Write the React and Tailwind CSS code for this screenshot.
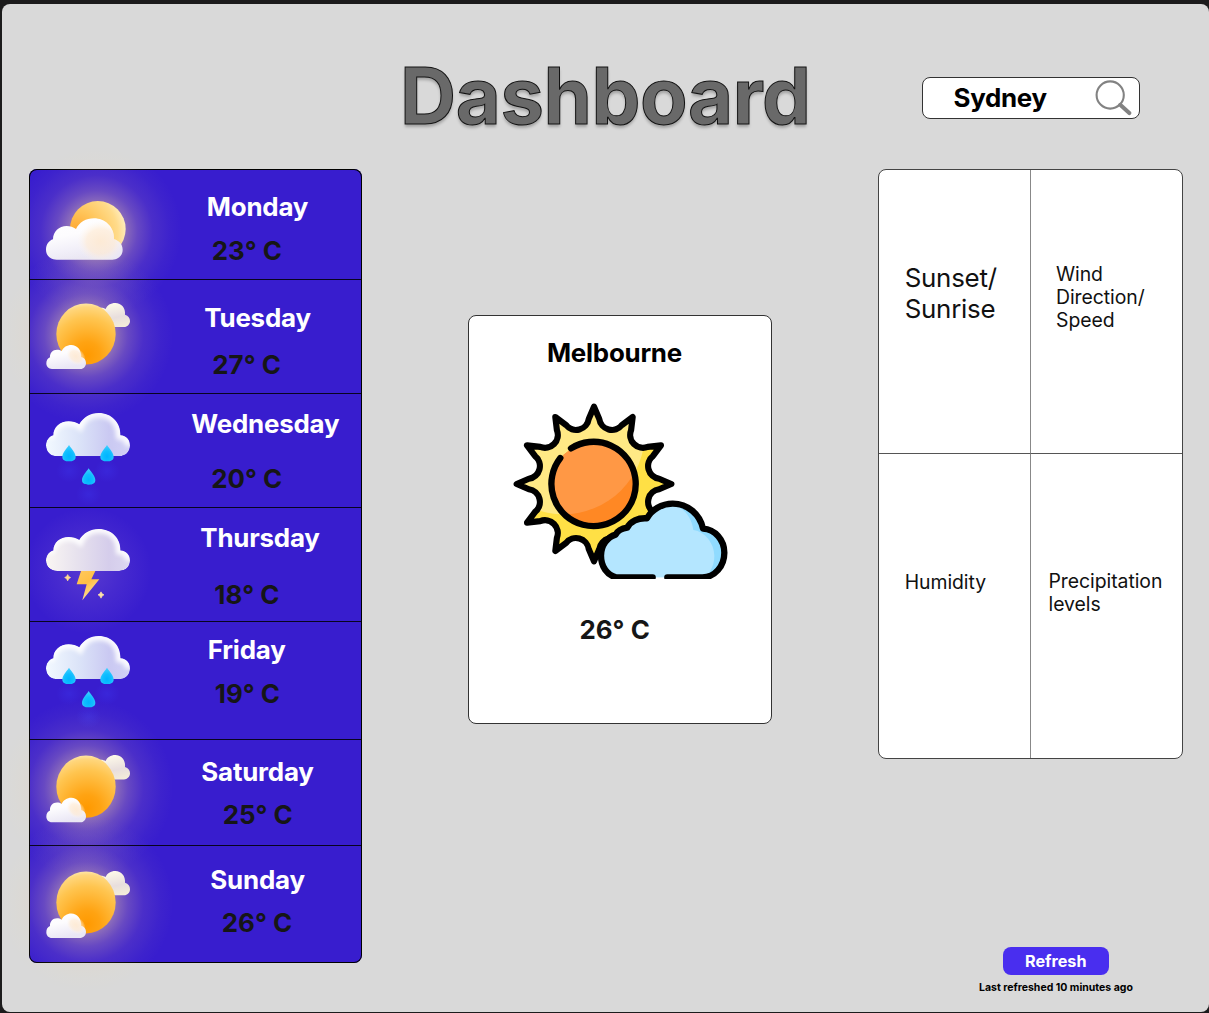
import React from "react";

const CLOUD =
  "M112 126C90 126 78 112 78 94C78 79 88 68 100 65C100 41 120 24 146 24C158 24 169 27 178 33C189 13 211 0 236 0C274 0 303 28 301 65C320 66 330 80 330 95C330 113 317 126 298 126Z";

const NEAR_CLOUD =
  "M170 779C150 779 138 765 138 749C138 733 147 722 159 718C159 695 177 678 200 678C210 678 220 681 228 687C238 667 258 655 282 655C316 655 344 682 342 718C357 722 368 733 368 749C368 766 355 779 337 779Z";

function Defs() {
  return (
    <svg className="absolute size-0" aria-hidden="true">
      <defs>
        <radialGradient id="glow">
          <stop offset="0" stopColor="#ffdf80" stopOpacity="0.5" />
          <stop offset="0.33" stopColor="#fbd6a0" stopOpacity="0.44" />
          <stop offset="0.48" stopColor="#f5cca0" stopOpacity="0.25" />
          <stop offset="0.66" stopColor="#f3c8a0" stopOpacity="0.1" />
          <stop offset="0.85" stopColor="#f8e09a" stopOpacity="0.03" />
          <stop offset="1" stopColor="#f8e09a" stopOpacity="0" />
        </radialGradient>
        <radialGradient id="softGlow">
          <stop offset="0" stopColor="#c9a0d8" stopOpacity="0.22" />
          <stop offset="0.5" stopColor="#c9a0d8" stopOpacity="0.1" />
          <stop offset="1" stopColor="#c9a0d8" stopOpacity="0" />
        </radialGradient>
        <radialGradient id="dropGlow">
          <stop offset="0" stopColor="#3d3cf5" stopOpacity="0.3" />
          <stop offset="1" stopColor="#3d3cf5" stopOpacity="0" />
        </radialGradient>
        <radialGradient id="sun" cx="0.52" cy="0.85" r="0.88">
          <stop offset="0" stopColor="#ff9900" />
          <stop offset="0.25" stopColor="#ffa312" />
          <stop offset="0.7" stopColor="#ffc550" />
          <stop offset="0.9" stopColor="#ffd67c" />
          <stop offset="1" stopColor="#ffedbb" />
        </radialGradient>
        <radialGradient id="sunBehind" cx="0.1" cy="0.6" r="0.95">
          <stop offset="0" stopColor="#ffa229" />
          <stop offset="0.45" stopColor="#ffc55a" />
          <stop offset="0.8" stopColor="#ffdb8a" />
          <stop offset="1" stopColor="#fff0c8" />
        </radialGradient>
        <linearGradient id="white" x1="0" y1="0" x2="0.35" y2="1">
          <stop offset="0" stopColor="#ffffff" />
          <stop offset="0.45" stopColor="#fdfcfe" />
          <stop offset="1" stopColor="#eae7f5" />
        </linearGradient>
        <radialGradient id="warm">
          <stop offset="0" stopColor="#ffe8cc" stopOpacity="0.8" />
          <stop offset="0.6" stopColor="#ffebd3" stopOpacity="0.65" />
          <stop offset="1" stopColor="#fff6ec" stopOpacity="0" />
        </radialGradient>
        <linearGradient id="backCloud" x1="0.4" y1="0" x2="0.7" y2="1">
          <stop offset="0" stopColor="#fffbea" />
          <stop offset="0.6" stopColor="#e8dedd" />
          <stop offset="1" stopColor="#f3ecd9" />
        </linearGradient>
        <linearGradient id="rainCloud" x1="0" y1="0.6" x2="1" y2="0.6">
          <stop offset="0" stopColor="#f2f9ff" />
          <stop offset="0.4" stopColor="#dbe3f8" />
          <stop offset="0.75" stopColor="#cac9f2" />
          <stop offset="1" stopColor="#d2d1f6" />
        </linearGradient>
        <linearGradient id="stormCloud" x1="0" y1="0.6" x2="1" y2="0.6">
          <stop offset="0" stopColor="#faf6f3" />
          <stop offset="0.35" stopColor="#e8e3ee" />
          <stop offset="0.75" stopColor="#d5cdeb" />
          <stop offset="1" stopColor="#dcd7f1" />
        </linearGradient>
        <radialGradient id="drop" cx="0.5" cy="0.7" r="0.65">
          <stop offset="0" stopColor="#00b4ff" />
          <stop offset="0.5" stopColor="#0fbeff" />
          <stop offset="1" stopColor="#3fceff" />
        </radialGradient>
        <linearGradient id="bolt" x1="0" y1="0" x2="0.5" y2="1">
          <stop offset="0" stopColor="#ffc95f" />
          <stop offset="0.5" stopColor="#ffbf45" />
          <stop offset="1" stopColor="#ffe0a0" />
        </linearGradient>
        <clipPath id="cloudClip">
          <path d={CLOUD} />
        </clipPath>
        <clipPath id="nearCloudClip">
          <path d={NEAR_CLOUD} />
        </clipPath>
        <filter id="blur" x="-30%" y="-30%" width="160%" height="160%">
          <feGaussianBlur stdDeviation="7" />
        </filter>
      </defs>
    </svg>
  );
}

function PartlyCloudy({ className }) {
  return (
    <svg viewBox="138 603 252 176" preserveAspectRatio="none" className={className}>
      <circle cx="290" cy="694" r="255" fill="url(#glow)" />
      <ellipse cx="293.500" cy="687" rx="83.500" ry="84" fill="url(#sunBehind)" />
      <path d={NEAR_CLOUD} fill="url(#white)" />
      <ellipse cx="302" cy="724" rx="70" ry="62" fill="url(#warm)" clipPath="url(#nearCloudClip)" />
    </svg>
  );
}

function Sunny({ className }) {
  return (
    <svg viewBox="78 83 252 199" preserveAspectRatio="none" className={className}>
      <circle cx="198" cy="180" r="262" fill="url(#glow)" />
      <path
        d="M232 155V100C240 95 250 97 257 101C261 90 272 83 286 83C304 83 317 98 315 118C325 121 330 128 330 137C330 147 322 155 312 155Z"
        fill="url(#backCloud)"
      />
      <ellipse cx="198" cy="176" rx="89" ry="91.500" fill="url(#sun)" />
      <path
        d="M96 281C86 281 79 274 79 264C79 255 83 249 90 246C89 233 98 223 111 223C116 223 121 224 125 227C130 216 141 209 154 209C171 209 185 224 183 245C193 247 198 254 198 263C198 273 191 281 181 281Z"
        fill="url(#white)"
      />
      <ellipse cx="168" cy="243" rx="32" ry="24" fill="url(#warm)" transform="rotate(40 168 243)" />
    </svg>
  );
}

function Drop({ x, y }) {
  return (
    <g>
      <ellipse cx={x} cy={y + 78} rx="38" ry="34" fill="url(#dropGlow)" />
      <path
        transform={`translate(${x} ${y})`}
        d="M0 0C7 11 20 24 20 35C20 45 12 49 0 49C-12 49 -20 45 -20 35C-20 24 -7 11 0 0Z"
        fill="url(#drop)"
      />
    </g>
  );
}

function CloudBody({ fill }) {
  return (
    <g clipPath="url(#cloudClip)">
      <path d={CLOUD} fill={fill} />
      <path
        d="M92 74C98 40 122 26 146 26C160 26 170 30 180 38C190 14 212 2 236 2C274 2 298 26 299 66C318 68 326 80 328 95"
        fill="none"
        stroke="#ffffff"
        strokeWidth="22"
        opacity="0.9"
        filter="url(#blur)"
      />
    </g>
  );
}

function Rainy({ className }) {
  return (
    <svg viewBox="78 0 252 216" preserveAspectRatio="none" className={className}>
      <g transform="scale(1 1.03)">
        <CloudBody fill="url(#rainCloud)" />
      </g>
      <Drop x={147} y={96} />
      <Drop x={261} y={96} />
      <Drop x={206} y={166} />
    </svg>
  );
}

function Stormy({ className }) {
  return (
    <svg viewBox="78 0 252 215" preserveAspectRatio="none" className={className}>
      <circle cx="204" cy="125" r="190" fill="url(#softGlow)" />
      <CloudBody fill="url(#stormCloud)" />
      <path d="M183 126H226L214 151H238L187 214L200 166H170Z" fill="url(#bolt)" />
      <path d="M143 137Q145 144 152 146Q145 148 143 156Q141 148 134 146Q141 144 143 137Z" fill="#ffd98f" stroke="#ffd98f" strokeWidth="2" />
      <path d="M243 189Q245 196 252 198Q245 200 243 208Q241 200 234 198Q241 196 243 189Z" fill="#ffe3a8" stroke="#ffe3a8" strokeWidth="2" />
    </svg>
  );
}

const point = (radius, degrees) => {
  const a = (degrees * Math.PI) / 180;
  return `${(282 + radius * Math.sin(a)).toFixed(1)} ${(267 - radius * Math.cos(a)).toFixed(1)}`;
};

const SUN_RAYS =
  Array.from({ length: 12 }, (_, i) => {
    const a = i * 30;
    return `${i ? "L" : "M"}${point(232, a)}L${point(196, a + 4.6)}A38.500 38.500 0 0 0 ${point(196, a + 25.4)}`;
  }).join("") + "Z";

const BIG_CLOUD =
  "M348 547C322 541 303 515 303 482C303 452 322 426 347 419C354 405 368 400 382 398C391 379 414 368 441 370C455 344 485 326 518 326C563 326 600 358 609 401C645 403 673 435 673 473C673 513 645 547 607 547";

function CurrentWeather({ className }) {
  return (
    <svg viewBox="0 0 720 552" className={className}>
      <defs>
        <clipPath id="rays">
          <path d={SUN_RAYS} />
        </clipPath>
        <clipPath id="core">
          <circle cx="282" cy="267" r="126" />
        </clipPath>
        <clipPath id="bigCloud">
          <path d={BIG_CLOUD} />
        </clipPath>
      </defs>
      <path d={SUN_RAYS} fill="#ffe045" />
      <circle cx="190" cy="113" r="245" fill="#ffe985" clipPath="url(#rays)" />
      <path d={SUN_RAYS} fill="none" stroke="#000" strokeWidth="18.500" strokeLinejoin="round" />
      <circle cx="282" cy="267" r="126" fill="#ff8824" />
      <circle cx="190" cy="113" r="245" fill="#ff9845" clipPath="url(#core)" />
      <path d="M213 160A126.500 126.500 0 1 1 181 189" fill="none" stroke="#000" strokeWidth="19" strokeLinecap="round" />
      <path d={BIG_CLOUD} fill="#90dbff" />
      <path
        clipPath="url(#bigCloud)"
        d="M290 552V320H490C540 325 575 360 580 405C615 410 643 445 643 483C643 512 630 535 610 552Z"
        fill="#b4e6ff"
      />
      <path
        d={BIG_CLOUD + "H502M458 547H348"}
        fill="none"
        stroke="#000"
        strokeWidth="19"
        strokeLinecap="round"
        strokeLinejoin="round"
      />
    </svg>
  );
}

const days = [
  { name: "Monday", temp: "23° C", Icon: PartlyCloudy, row: "h-[110px]", icon: "mt-[32px] h-[58.700px]", nameAt: "mt-[22px] ml-[76.500px]", tempAt: "mt-[13px] ml-[81.500px]" },
  { name: "Tuesday", temp: "27° C", Icon: Sunny, row: "h-[114px]", icon: "mt-[23.700px] h-[66.300px]", nameAt: "mt-[23px] ml-[74px]", tempAt: "mt-[16px] ml-[82px]" },
  { name: "Wednesday", temp: "20° C", Icon: Rainy, row: "h-[114px]", icon: "mt-[20.300px] h-[72px]", nameAt: "mt-[15px] ml-[61px]", tempAt: "mt-[24px] ml-[81px]" },
  { name: "Thursday", temp: "18° C", Icon: Stormy, row: "h-[114px]", icon: "mt-[22px] h-[71.500px]", nameAt: "mt-[15px] ml-[70px]", tempAt: "mt-[26px] ml-[84px]" },
  { name: "Friday", temp: "19° C", Icon: Rainy, row: "h-[118px]", icon: "mt-[15px] h-[71.700px]", nameAt: "mt-[13px] ml-[77.500px]", tempAt: "mt-[13px] ml-[84.500px]" },
  { name: "Saturday", temp: "25° C", Icon: Sunny, row: "h-[106px]", icon: "mt-[16.300px] h-[67.700px]", nameAt: "mt-[17px] ml-[71px]", tempAt: "mt-[12px] ml-[92.500px]" },
  { name: "Sunday", temp: "26° C", Icon: Sunny, row: "h-[118px]", icon: "mt-[26.300px] h-[67.300px]", nameAt: "mt-[19px] ml-[80px]", tempAt: "mt-[12px] ml-[91.500px]" },
];

function DayRow({ name, temp, Icon, row, icon, nameAt, tempAt, divided }) {
  return (
    <li className={`${row} relative flex items-start`}>
      {divided && <span className="absolute inset-x-0 top-0 h-px bg-black/85" />}
      <Icon className={`${icon} ml-[17.300px] w-[84px] shrink-0 overflow-visible`} />
      <div className="relative flex flex-col items-start text-[25.900px] leading-[31px] font-bold whitespace-nowrap">
        <h2 className={`${nameAt} tracking-[-0.2px] text-white`}>{name}</h2>
        <p className={`${tempAt} text-[#161616]`}>{temp}</p>
      </div>
    </li>
  );
}

export default function App() {
  return (
    <div className="h-[1013px] w-[1209px] overflow-hidden bg-[#1c1b1c] pt-1 pl-[2px] font-['Inter',sans-serif]">
      <Defs />
      <div className="flex h-[1008px] flex-col rounded-lg bg-[#d9d9d9]">
        <header className="flex h-[165px] shrink-0 items-start">
          <h1 className="mt-[45px] ml-[398px] w-[522px] text-[77.700px] leading-[94px] font-bold tracking-[-0.4px] text-[#696969] [-webkit-text-stroke:1px_#111] [text-shadow:0_3px_3px_rgba(0,0,0,0.25)]">
            Dashboard
          </h1>
          <div className="mt-[73px] flex h-[42px] w-[218px] items-start rounded-lg border border-[#333] bg-white">
            <span className="mt-[4px] ml-[30.500px] w-[140px] text-[25.900px] leading-[31px] font-bold tracking-[-0.3px] text-black">
              Sydney
            </span>
            <svg viewBox="0 0 38 38" className="mt-[2px] size-[38px]" fill="none" stroke="#828282">
              <circle cx="16.200" cy="15" r="13.600" strokeWidth="2.100" />
              <path d="M26.200 24.800L35.300 33.100" strokeWidth="4" strokeLinecap="round" />
            </svg>
          </div>
        </header>

        <main className="flex items-start">
          <ul className="ml-[27px] h-[794px] w-[333px] rounded-lg bg-[#381dce] ring-1 ring-black ring-inset">
            {days.map((day, i) => (
              <DayRow key={day.name} {...day} divided={i > 0} />
            ))}
          </ul>

          <section className="mt-[146px] ml-[106px] flex h-[409px] w-[304px] flex-col items-start rounded-lg border border-[#333] bg-white text-[25.900px] leading-[31px] font-bold">
            <h2 className="mt-[21px] ml-[78px] tracking-[-0.25px] text-black">Melbourne</h2>
            <CurrentWeather className="mt-[27px] ml-[31px] h-[184px] w-[240px] shrink-0" />
            <p className="mt-[35px] ml-[110.500px] text-[#161616]">26° C</p>
          </section>

          <div className="ml-[106px] flex w-[305px] flex-col">
            <div className="grid h-[590px] w-[305px] grid-cols-[152px_1fr] grid-rows-[284px_1fr] rounded-lg border border-[#444] bg-white text-[19.400px] leading-[23.300px] tracking-[-0.05px] text-[#111]">
              <div className="border-r border-b border-r-[#888] border-b-[#555] pt-[92px] pl-[25.700px] text-[25.900px] leading-[31.300px] tracking-[-0.25px]">
                Sunset/
                <br />
                Sunrise
              </div>
              <div className="border-b border-b-[#555] pt-[92.500px] pl-[25px]">
                Wind
                <br />
                Direction/
                <br />
                Speed
              </div>
              <div className="border-r border-r-[#888] pt-[117px] pl-[25.700px]">Humidity</div>
              <div className="pt-[115.500px] pl-[17.500px]">
                Precipitation
                <br />
                levels
              </div>
            </div>
            <button className="mt-[188px] ml-[124.500px] h-7 w-[106.500px] rounded-lg bg-[#492eef] text-[16.200px] leading-7 font-bold text-white">
              Refresh
            </button>
            <p className="mt-[6px] ml-[101px] text-[10.500px] leading-[13px] font-bold whitespace-nowrap text-black">
              Last refreshed 10 minutes ago
            </p>
          </div>
        </main>
      </div>
    </div>
  );
}
